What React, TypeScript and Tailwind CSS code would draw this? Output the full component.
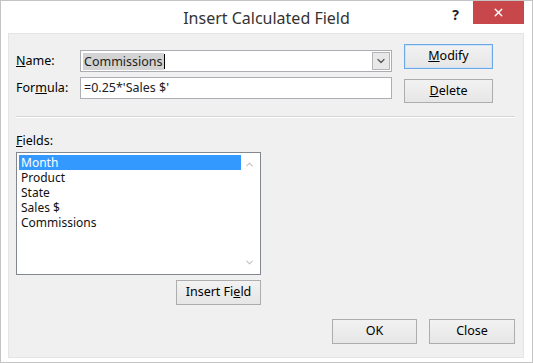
import { ChevronDown, ChevronUp, X } from "lucide-react";

const font = { fontFamily: '"Noto Sans", "Open Sans", sans-serif' };

function DlgButton({
  label,
  isDefault,
  className = "",
}: {
  label: React.ReactNode;
  isDefault?: boolean;
  className?: string;
}) {
  return (
    <button
      className={`flex items-center justify-center border bg-gradient-to-b from-[#f2f2f2] to-[#e6e6e6] text-[12.5px] text-black ${
        isDefault ? "border-[#6ea8e4] shadow-[inset_0_0_0_1px_#cfe3f7]" : "border-[#adadad]"
      } ${className}`}
    >
      {label}
    </button>
  );
}

const fields = ["Month", "Product", "State", "Sales $", "Commissions"];

export default function App() {
  return (
    <div
      className="flex h-[363px] w-[533px] flex-col border border-[#c4c4c4] bg-white"
      style={font}
    >
      {/* title bar */}
      <div className="grid h-[32px] shrink-0 grid-cols-[1fr_auto_1fr]">
        <div />
        <div className="pt-[5px] text-[16px] text-[#333]">Insert Calculated Field</div>
        <div className="flex items-start justify-end pr-[8px]">
          <span className="mr-[14px] mt-[3px] text-[14px] font-bold text-[#222]">?</span>
          <button className="flex h-[23px] w-[51px] items-center justify-center bg-[#c7474a] text-white">
            <X size={13} strokeWidth={2.5} />
          </button>
        </div>
      </div>

      {/* body */}
      <div className="mb-[4px] ml-[7px] mr-[8px] flex flex-1 flex-col border border-[#e4e4e4] bg-[#f0f0f0] pl-[7px] pr-[8px] text-[12.5px] text-black">
        <div className="flex">
          <div className="flex flex-col gap-[5px] pt-[16px]">
            <div className="flex h-[22px] items-center">
              <span className="w-[64px]">
                <u>N</u>ame:
              </span>
              <div className="flex h-[22px] w-[312px] items-center border border-[#abadb3] bg-white">
                <div className="flex flex-1 items-center pl-[2px]">
                  <span className="bg-[#d3d3d3] px-[1px] leading-[17px] text-[#222]">Commissions</span>
                  <span className="h-[15px] w-px bg-black" />
                </div>
                <div className="mr-px flex h-[18px] w-[18px] items-center justify-center border border-[#b5b5b5] bg-[#e8e8e8] text-[#555]">
                  <ChevronDown size={12} strokeWidth={2.5} />
                </div>
              </div>
            </div>
            <div className="flex h-[22px] items-center">
              <span className="w-[64px]">
                For<u>m</u>ula:
              </span>
              <div className="flex h-[22px] w-[312px] items-center border border-[#abadb3] bg-white pl-[3px] text-[#222]">
                =0.25*'Sales $'
              </div>
            </div>
          </div>
          <div className="ml-[12px] flex flex-col gap-[10px] pt-[10px]">
            <DlgButton
              isDefault
              className="h-[25px] w-[89px]"
              label={
                <span>
                  <u>M</u>odify
                </span>
              }
            />
            <DlgButton
              className="h-[24px] w-[89px]"
              label={
                <span>
                  <u>D</u>elete
                </span>
              }
            />
          </div>
        </div>

        <div className="mt-[13px] border-t border-b border-t-[#d5d5d5] border-b-white" />

        <div className="mt-[15px] leading-[16px]">
          <u>F</u>ields:
        </div>
        <div className="mt-[3px] flex h-[123px] w-[245px] border border-[#828790] bg-white p-[2px]">
          <div className="flex flex-1 flex-col text-[12px]">
            {fields.map((f, i) => (
              <div
                key={f}
                className={`h-[15px] overflow-hidden pl-[2px] leading-[15px] ${
                  i === 0 ? "bg-[#3399ff] text-white" : "text-[#111]"
                }`}
              >
                {f}
              </div>
            ))}
          </div>
          <div className="flex w-[17px] flex-col items-center justify-between py-[4px] text-[#c2c2c2]">
            <ChevronUp size={11} strokeWidth={2.5} />
            <ChevronDown size={11} strokeWidth={2.5} />
          </div>
        </div>
        <div className="mt-[5px] flex w-[245px] justify-end">
          <DlgButton
            className="h-[25px] w-[85px]"
            label={
              <span>
                Insert Fi<u>e</u>ld
              </span>
            }
          />
        </div>

        <div className="mt-[14px] flex justify-end gap-[12px]">
          <DlgButton className="h-[25px] w-[85px]" label="OK" />
          <DlgButton className="h-[25px] w-[86px]" label="Close" />
        </div>
      </div>
    </div>
  );
}
